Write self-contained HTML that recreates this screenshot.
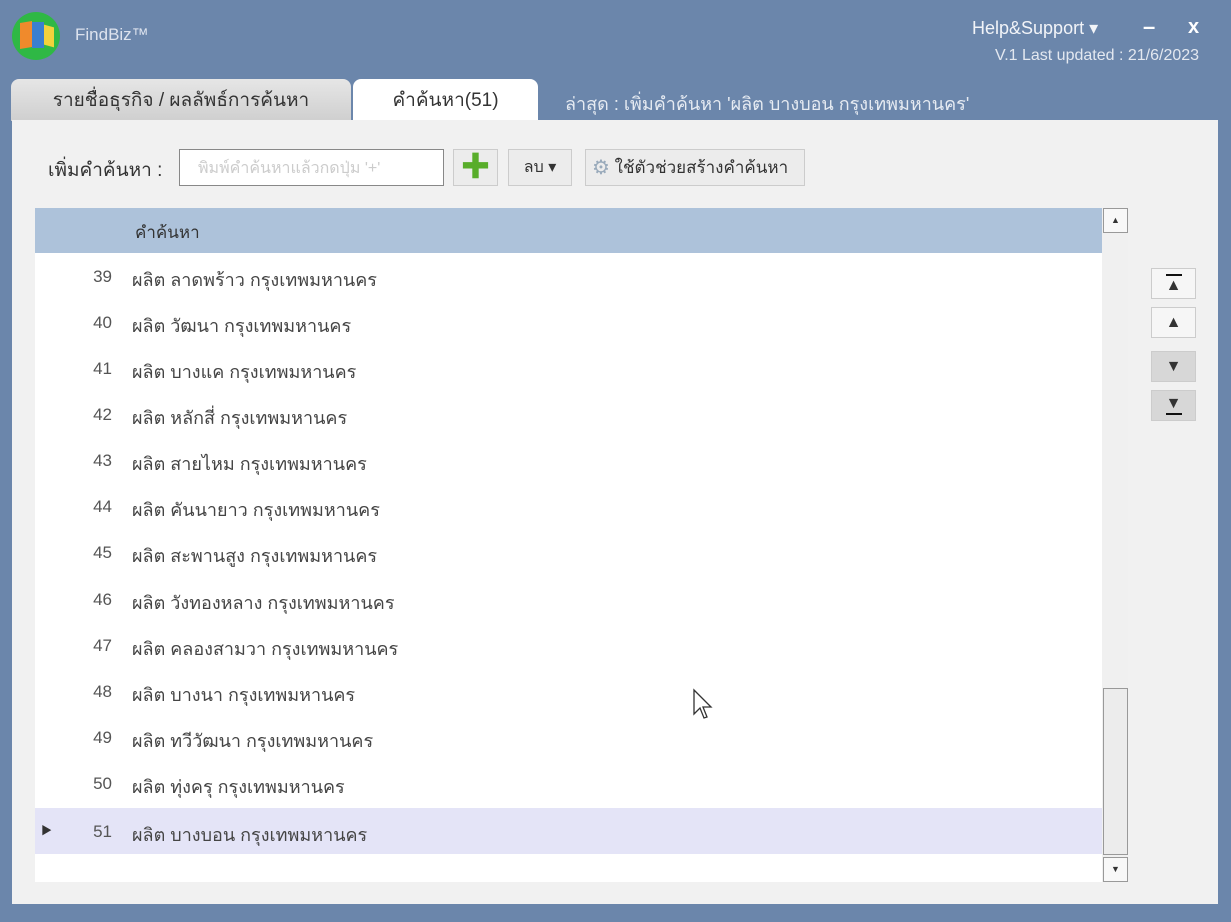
<!DOCTYPE html>
<html><head><meta charset="utf-8"><style>
*{box-sizing:border-box;margin:0;padding:0}
body{width:1231px;height:922px;overflow:hidden;background:#6b86ab;font-family:"Liberation Sans","Noto Sans CJK SC",sans-serif;position:relative;color:#333}
.abs{position:absolute}
.tab{position:absolute;top:79px;height:42px;border-radius:8px 8px 0 0;font-size:19px;display:flex;align-items:center;justify-content:center}
.panel{left:12px;top:120px;width:1206px;height:784px;background:#f1f1f1}
.grid{left:35px;top:208px;width:1067px;height:674px;background:#fff}
.hdr{left:35px;top:208px;width:1067px;height:45px;background:#adc2da;font-size:17px}
.row{position:absolute;left:35px;width:1067px;height:46px;font-size:18px;color:#444}
.row .n{position:absolute;right:990px;top:14px;color:#555;font-size:17px}
.row .t{position:absolute;left:97px;top:12px}
.nav{position:absolute;left:1151px;width:45px;height:31px;border:1px solid #ccc;background:#f6f6f6;display:flex;align-items:center;justify-content:center}
.btn{position:absolute;top:149px;height:37px;border:1px solid #ccc;background:#ececec;display:flex;align-items:center;justify-content:center;font-size:16px}
</style></head><body>
<div class="abs" style="left:12px;top:12px;width:48px;height:48px;border-radius:50%;background:#2fb845"></div>
<div class="abs" style="left:20px;top:22px;width:12px;height:26px;background:#f08a2c;transform:skewY(-10deg)"></div>
<div class="abs" style="left:32px;top:22px;width:12px;height:26px;background:#3a7fd0"></div>
<div class="abs" style="left:44px;top:26px;width:10px;height:20px;background:#f2d23c;transform:skewY(15deg)"></div>
<div class="abs" style="left:75px;top:25px;font-size:17px;color:#dde3ee">FindBiz™</div>
<div class="abs" style="left:972px;top:18px;font-size:18px;color:#f2f4f8">Help&amp;Support ▾</div>
<div class="abs" style="left:1143px;top:14px;font-size:22px;color:#fff;font-weight:bold">–</div>
<div class="abs" style="left:1188px;top:16px;font-size:20px;color:#fff;font-weight:bold">x</div>
<div class="abs" style="left:995px;top:47px;font-size:16px;color:#e3e8f0">V.1 Last updated : 21/6/2023</div>
<div class="tab" style="left:11px;width:340px;background:linear-gradient(#e6e6e6,#cfcfcf);color:#333">รายชื่อธุรกิจ / ผลลัพธ์การค้นหา</div>
<div class="tab" style="left:353px;width:185px;background:#fff;color:#333">คำค้นหา(51)</div>
<div class="abs" style="left:565px;top:89px;font-size:18px;color:#e6ebf2">ล่าสุด : เพิ่มคำค้นหา 'ผลิต บางบอน กรุงเทพมหานคร'</div>
<div class="abs panel"></div>
<div class="abs" style="left:48px;top:155px;font-size:19px;color:#333">เพิ่มคำค้นหา :</div>
<div class="abs" style="left:179px;top:149px;width:265px;height:37px;border:1px solid #888;background:#fff;font-size:16px;color:#ccc;padding:6px 0 0 18px">พิมพ์คำค้นหาแล้วกดปุ่ม '+'</div>
<div class="btn" style="left:453px;width:45px"><span style="color:#58ad2a;font-size:30px;font-weight:bold;line-height:1">✚</span></div>
<div class="btn" style="left:508px;width:64px">ลบ ▾</div>
<div class="btn" style="left:585px;width:220px;justify-content:flex-start;padding-left:6px;font-size:17px"><span style="font-size:20px;color:#9ab">⚙</span>&nbsp;ใช้ตัวช่วยสร้างคำค้นหา</div>
<div class="abs grid"></div>
<div class="abs hdr"><span style="position:absolute;left:100px;top:11px">คำค้นหา</span></div>
<div class="abs" style="left:1102px;top:208px;width:26px;height:674px;background:#f0f0f0"></div>
<div class="abs" style="left:1103px;top:208px;width:25px;height:25px;border:1px solid #999;background:#f8f8f8;font-size:9px;text-align:center;line-height:22px">▲</div>
<div class="abs" style="left:1103px;top:688px;width:25px;height:167px;border:1px solid #999;background:#ececec"></div>
<div class="abs" style="left:1103px;top:857px;width:25px;height:25px;border:1px solid #999;background:#f8f8f8;font-size:9px;text-align:center;line-height:22px">▼</div>
<div class="nav" style="top:268px"><div style="border-top:2px solid #111;width:16px;position:absolute;top:5px"></div><span style="font-size:16px;margin-top:4px">▲</span></div>
<div class="nav" style="top:307px"><span style="font-size:16px">▲</span></div>
<div class="nav" style="top:351px;background:#d7d7d7"><span style="font-size:16px">▼</span></div>
<div class="nav" style="top:390px;background:#d7d7d7"><span style="font-size:16px;margin-bottom:4px">▼</span><div style="border-top:2px solid #111;width:16px;position:absolute;bottom:5px"></div></div>
<div class="row" style="top:253px"><span class="n">39</span><span class="t">ผลิต ลาดพร้าว กรุงเทพมหานคร</span></div>
<div class="row" style="top:299px"><span class="n">40</span><span class="t">ผลิต วัฒนา กรุงเทพมหานคร</span></div>
<div class="row" style="top:345px"><span class="n">41</span><span class="t">ผลิต บางแค กรุงเทพมหานคร</span></div>
<div class="row" style="top:391px"><span class="n">42</span><span class="t">ผลิต หลักสี่ กรุงเทพมหานคร</span></div>
<div class="row" style="top:437px"><span class="n">43</span><span class="t">ผลิต สายไหม กรุงเทพมหานคร</span></div>
<div class="row" style="top:483px"><span class="n">44</span><span class="t">ผลิต คันนายาว กรุงเทพมหานคร</span></div>
<div class="row" style="top:529px"><span class="n">45</span><span class="t">ผลิต สะพานสูง กรุงเทพมหานคร</span></div>
<div class="row" style="top:576px"><span class="n">46</span><span class="t">ผลิต วังทองหลาง กรุงเทพมหานคร</span></div>
<div class="row" style="top:622px"><span class="n">47</span><span class="t">ผลิต คลองสามวา กรุงเทพมหานคร</span></div>
<div class="row" style="top:668px"><span class="n">48</span><span class="t">ผลิต บางนา กรุงเทพมหานคร</span></div>
<div class="row" style="top:714px"><span class="n">49</span><span class="t">ผลิต ทวีวัฒนา กรุงเทพมหานคร</span></div>
<div class="row" style="top:760px"><span class="n">50</span><span class="t">ผลิต ทุ่งครุ กรุงเทพมหานคร</span></div>
<div class="row" style="top:808px;background:#e4e4f7"><span style="position:absolute;left:6px;top:14px;font-size:11px;color:#333">▶</span><span class="n">51</span><span class="t">ผลิต บางบอน กรุงเทพมหานคร</span></div>
<svg class="abs" style="left:692px;top:688px" width="22" height="32" viewBox="0 0 22 32"><path d="M2 2 L2 26 L8 20 L12 30 L15 29 L11 19 L19 19 Z" fill="#fff" stroke="#333" stroke-width="1.3"/></svg>
</body></html>
